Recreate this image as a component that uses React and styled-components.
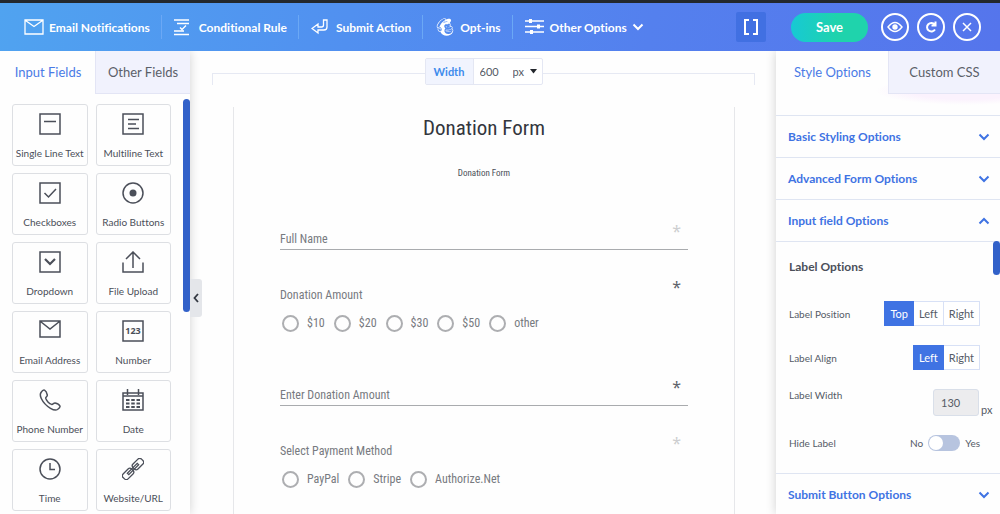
import React, { useState } from "react";
import styled, { createGlobalStyle } from "styled-components";
import { FaMailchimp } from "react-icons/fa";

const GlobalStyle = createGlobalStyle`
  * {
    box-sizing: border-box;
  }

  body {
    margin: 0;
    background: #fefefe;
    color: #555b66;
    font-family: Lato, "Open Sans", sans-serif;
    font-size: 11px;
    font-variant-ligatures: none;
  }

  button, input, select {
    margin: 0;
    padding: 0;
    border: 0;
    background: none;
    color: inherit;
    font: inherit;
    font-variant-ligatures: none;
  }

  button {
    cursor: pointer;
  }
`;

const Page = styled.div`
  display: flex;
  flex-direction: column;
  height: 100vh;
  overflow: hidden;
`;

const TopBar = styled.header`
  position: relative;
  z-index: 1;
  display: flex;
  align-items: center;
  justify-content: space-between;
  flex: none;
  height: 51px;
  padding: 0 19px 0 12px;
  border-top: 3px solid #23282d;
  background: linear-gradient(100deg, #50a3f0 0%, #5190f0 35%, #5480ee 65%, #5575ec 100%);
  color: white;
`;

const Nav = styled.nav`
  display: flex;
`;

const NavItem = styled.button`
  display: flex;
  align-items: center;
  gap: 5px;
  height: 24px;
  padding: 0 11px 0 12px;
  border-right: 1px solid #6ba8f5;
  font-size: 12px;
  font-weight: 700;
  white-space: nowrap;

  &:last-child {
    border-right: 0;
  }

  svg {
    flex: none;
  }
`;

const Actions = styled.div`
  display: flex;
  align-items: center;
  gap: 8px;
`;

const BracketButton = styled.button`
  display: grid;
  place-items: center;
  width: 30px;
  height: 30px;
  margin-right: 17px;
  border-radius: 2px;
  background: #4170e2;
`;

const SaveButton = styled.button`
  width: 77px;
  height: 29px;
  margin-right: 5px;
  border-radius: 15px;
  background: linear-gradient(90deg, #17c9d4, #1fd3ac 60%);
  font-size: 13px;
  font-weight: 700;
`;

const RoundButton = styled.button`
  display: grid;
  place-items: center;
  width: 28px;
  height: 28px;
  border: 2px solid white;
  border-radius: 50%;
`;

const Body = styled.div`
  display: flex;
  flex: 1;
  min-height: 0;
`;

const Sidebar = styled.aside`
  position: relative;
  flex: none;
  width: 190px;
  background: #fefefe;
  box-shadow: 0 0 10px rgba(0, 0, 0, 0.18);
`;

const Tabs = styled.div`
  display: flex;
  height: 43px;
`;

const Tab = styled.button`
  flex: 1;
  border-left: 1px solid ${(props) => (props.$active ? "transparent" : "#e3e5f5")};
  border-bottom: 1px solid ${(props) => (props.$active ? "transparent" : "#e3e5f5")};
  background: ${(props) => (props.$active ? "transparent" : "#f1f2fd")};
  color: ${(props) => (props.$active ? "#4a7be6" : "#5b5f69")};
  font-size: 13px;
  white-space: nowrap;
`;

const FieldGrid = styled.div`
  display: grid;
  grid-template-columns: repeat(2, minmax(0, 1fr));
  gap: 7px 8px;
  padding: 10px 19px 0 12px;
`;

const FieldCard = styled.button`
  display: flex;
  flex-direction: column;
  align-items: center;
  justify-content: space-between;
  height: 62px;
  padding: 8px 0 5px;
  border: 1px solid #dddfe3;
  border-radius: 3px;
  color: #4b4f59;
  font-size: 10px;
  line-height: 14px;
  white-space: nowrap;
`;

const Thumb = styled.div`
  position: absolute;
  top: ${(props) => props.$top}px;
  right: 0;
  width: 7px;
  height: ${(props) => props.$height}px;
  border-radius: 4px;
  background: #3261c9;
`;

const CollapseButton = styled.button`
  position: absolute;
  top: 228px;
  left: 100%;
  display: grid;
  place-items: center;
  width: 12px;
  height: 38px;
  border-radius: 0 3px 3px 0;
  background: #e4e6ea;
  color: #333842;
`;

const Canvas = styled.main`
  flex: 1;
  min-width: 0;
  display: flex;
  flex-direction: column;
`;

const Ruler = styled.div`
  position: relative;
  flex: none;
  height: 12px;
  margin: 22px 21px 0 22px;
  border: 1px solid #e6e9f3;
  border-bottom: 0;
`;

const WidthControl = styled.div`
  position: absolute;
  top: -16px;
  left: 50%;
  display: flex;
  align-items: center;
  width: 118px;
  height: 27px;
  border: 1px solid #e4e7f3;
  border-radius: 2px;
  background: white;
  transform: translateX(-50%);

  label {
    width: 48px;
    border-right: 1px solid #e4e7f3;
    background: #f1f4fe;
    color: #3d8bec;
    font-weight: 700;
    line-height: 25px;
    text-align: center;
  }

  input {
    width: 34px;
    padding-left: 6px;
  }

  select {
    width: 26px;
    padding-left: 5px;
    appearance: none;
  }
`;

const SelectWrap = styled.span`
  display: flex;
  align-items: center;

  svg {
    flex: none;
    margin-left: -4px;
    pointer-events: none;
  }
`;

const Form = styled.form`
  flex: 1;
  margin: 22px 41px 0 43px;
  padding: 7px 46px 0;
  border: solid #e6e7ea;
  border-width: 0 1px;
  color: #777a80;
  font-family: "Roboto Condensed", Roboto, sans-serif;
  font-size: 12px;
`;

const FormTitle = styled.h1`
  margin: 0;
  color: #33363d;
  font-size: 21px;
  font-weight: 400;
  line-height: 28px;
  text-align: center;
`;

const FormSubtitle = styled.p`
  margin: 24px 0 49px;
  color: #4b4f57;
  font-size: 9px;
  line-height: 14px;
  text-align: center;
`;

const TextField = styled.div`
  display: grid;
  margin-bottom: 35px;
  border-bottom: 1px solid #a9abae;

  label, input {
    grid-area: 1 / 1;
    height: 20px;
    line-height: 20px;
  }
`;

const ChoiceField = styled.fieldset`
  margin: 0 0 53px;
  padding: 0;
  border: 0;
`;

const FieldLabel = styled.span`
  display: flex;
  justify-content: space-between;
  height: 20px;
  padding-right: 7px;
  line-height: 20px;
`;

const Required = styled.span`
  color: ${(props) => (props.$muted ? "#cdced0" : "#5f636b")};
  font-family: "Noto Sans", sans-serif;
  font-size: 16px;
  line-height: 4px;
`;

const Choices = styled.div`
  display: flex;
  gap: 9px;
  margin-top: 9px;
  padding-left: 2px;
`;

const Choice = styled.label`
  display: flex;
  align-items: center;
  gap: 8px;
  height: 18px;
  white-space: nowrap;

  input {
    width: 17px;
    height: 17px;
    border: 2px solid #adaeb1;
    border-radius: 50%;
    appearance: none;
  }

  input:checked {
    border-width: 5px;
    border-color: #3f70e4;
  }
`;

const StylePanel = styled(Sidebar)`
  width: 224px;
  background: radial-gradient(ellipse 90px 14px at 190px 40px, #fbf2fd 60%, #fefefe);
`;

const AccordionList = styled.div`
  margin-top: 21px;
`;

const AccordionHead = styled.button`
  display: flex;
  align-items: center;
  justify-content: space-between;
  width: 100%;
  height: 42px;
  padding: 0 10px 0 12px;
  border-top: 1px solid #dfe5f2;
  color: #3f73e3;
  font-size: 12px;
  font-weight: 700;
`;

const Settings = styled.section`
  display: grid;
  gap: 19px;
  padding: 16px 8px 22px 13px;
  border-top: 1px solid #dfe5f2;
  font-size: 10px;
`;

const SettingsTitle = styled.h2`
  margin: 0 0 6px;
  color: #4b4f59;
  font-size: 12px;
  font-weight: 700;
  line-height: 18px;
`;

const SettingRow = styled.div`
  display: flex;
  align-items: ${(props) => (props.$top ? "flex-start" : "center")};
  justify-content: space-between;
  padding-right: ${(props) => (props.$unit ? 0 : 12)}px;
`;

const Segments = styled.div`
  display: flex;
`;

const Segment = styled.button`
  height: 25px;
  padding: 0 5px;
  border: 1px solid ${(props) => (props.$active ? "#3f73e3" : "#d8e1f6")};
  background: ${(props) => (props.$active ? "#3f73e3" : "white")};
  color: ${(props) => (props.$active ? "white" : "inherit")};
  font-size: 11px;

  & + & {
    border-left-width: 0;
  }
`;

const NumberBox = styled.div`
  display: flex;
  align-items: flex-end;
  gap: 2px;
  height: 27px;
  font-size: 11px;

  input {
    width: 46px;
    height: 27px;
    padding-left: 7px;
    border: 1px solid #d9dfe9;
    border-radius: 3px;
    background: #ececee;
  }

  span {
    width: 11px;
    line-height: 12px;
  }
`;

const SwitchBox = styled.span`
  display: flex;
  align-items: center;
  gap: 5px;
  height: 16px;
`;

const Switch = styled.input`
  display: flex;
  align-items: center;
  width: 32px;
  height: 16px;
  padding: 1px;
  border-radius: 8px;
  background: #b7c4df;
  appearance: none;

  &::before {
    content: "";
    width: 14px;
    height: 14px;
    border-radius: 50%;
    background: white;
  }

  &:checked {
    justify-content: flex-end;
    background: #3f73e3;
  }
`;

const Icon = ({ size = 22, width, stroke = 1.5, children }) => (
  <svg
    width={width || size}
    height={size}
    viewBox={`0 0 ${width || size} ${size}`}
    fill="none"
    stroke="currentColor"
    strokeWidth={stroke}
    aria-hidden="true"
  >
    {children}
  </svg>
);

const Chevron = ({ up }) => (
  <Icon size={12} stroke={2}>
    <path d={up ? "M1.5 8.5 6 4l4.5 4.5" : "M1.5 3.5 6 8l4.5-4.5"} />
  </Icon>
);

const navItems = [
  {
    name: "Email Notifications",
    icon: (
      <Icon size={20} stroke={1.3}>
        <path d="M1 3h18v14H1zM1.5 3.5l8.500 6 8.500-6" />
      </Icon>
    ),
  },
  {
    name: "Conditional Rule",
    icon: (
      <Icon size={20} stroke={1.4}>
        <path d="M0 3h15M3 6.500h12M0 14h10M0 17.500h15M6 10.500l2 2 4-4" />
      </Icon>
    ),
  },
  {
    name: "Submit Action",
    icon: (
      <Icon size={20} stroke={1.3}>
        <path d="M12.500 3H16v7q0 3-3 3H7v3l-6-4.500L7 7v3h3.500q2 0 2-2z" />
      </Icon>
    ),
  },
  { name: "Opt-ins", icon: <FaMailchimp size={20} /> },
  {
    name: "Other Options",
    icon: (
      <Icon size={20} stroke={1.6}>
        <path d="M0 4h19M0 9.500h19M0 15h19" />
        <path d="M4 2h3v4H4zM12 7.500h3v4h-3zM5 13h3v4H5z" fill="currentColor" stroke="none" />
      </Icon>
    ),
    more: true,
  },
];

const fields = [
  {
    name: "Single Line Text",
    icon: <path d="M1 1h20v20H1zM5 8.500h12" />,
  },
  {
    name: "Multiline Text",
    icon: <path d="M1 1h20v20H1zM6 6.500h11M6 11h8M6 15.500h11" />,
  },
  {
    name: "Checkboxes",
    icon: <path d="M1 1h20v20H1zM5.500 11l4 4 7.500-8" />,
  },
  {
    name: "Radio Buttons",
    icon: (
      <>
        <circle cx="11" cy="11" r="10" />
        <circle cx="11" cy="11" r="3.500" fill="currentColor" stroke="none" />
      </>
    ),
  },
  {
    name: "Dropdown",
    icon: (
      <>
        <path d="M1 1h20v20H1z" />
        <path d="M6 8l5 5 5-5" strokeWidth="2.200" />
      </>
    ),
  },
  {
    name: "File Upload",
    icon: <path d="M1 11.500V21h20v-9.500M11 17V1.500M4 8l7-7 7 7" />,
  },
  {
    name: "Email Address",
    icon: <path d="M1 1h20v16H1zM1.500 1.500L11 9l9.500-7.500" />,
  },
  {
    name: "Number",
    icon: (
      <>
        <path d="M1 1h20v20H1z" />
        <text
          x="11"
          y="14"
          textAnchor="middle"
          fontSize="9"
          fontWeight="700"
          fontFamily="Open Sans, sans-serif"
          fill="currentColor"
          stroke="none"
        >
          123
        </text>
      </>
    ),
  },
  {
    name: "Phone Number",
    icon: (
      <path d="M2 3.500C3 2 4.500.7 5.500 1.200 7 2 8 4.500 8.300 6c.2 1.300-1.800 2-1.600 3.200.5 2.300 3.500 5.500 6 6.200 1.300.3 2-1.700 3.400-1.500 1.500.3 4.200 1.700 4.800 3 .5 1-1 2.600-2.400 3.600-1.500 1-4.500.3-7-1.200C7.500 16.900 4.200 13.500 2.300 9.500 1.200 7.200 1 5 2 3.500z" />
    ),
  },
  {
    name: "Date",
    icon: (
      <>
        <path d="M1 4h20v17H1zM1 7h20M5.500 0v6M16.500 0v6" />
        <path d="M4 11h14M4 14.500h14M4 18h14" strokeWidth="2" strokeDasharray="3.500 1.750" />
      </>
    ),
  },
  {
    name: "Time",
    icon: (
      <>
        <circle cx="11" cy="11" r="10" />
        <path d="M11 5v6.500h5" />
      </>
    ),
  },
  {
    name: "Website/URL",
    icon: (
      <g transform="rotate(-45 11 11)" strokeWidth="1.300">
        <rect x="-2" y="7.500" width="12" height="7" rx="2.500" />
        <rect x="12" y="7.500" width="12" height="7" rx="2.500" />
        <path d="M4 10h14v2H4z" />
      </g>
    ),
  },
];

const amounts = ["$10", "$20", "$30", "$50", "other"];
const methods = ["PayPal", "Stripe", "Authorize.Net"];

const SegmentControl = ({ label, options, initial }) => {
  const [value, setValue] = useState(initial);

  return (
    <SettingRow>
      <span>{label}</span>
      <Segments role="group" aria-label={label}>
        {options.map((option) => (
          <Segment
            key={option}
            type="button"
            $active={option === value}
            aria-pressed={option === value}
            onClick={() => setValue(option)}
          >
            {option}
          </Segment>
        ))}
      </Segments>
    </SettingRow>
  );
};

const LineInput = ({ id, label, muted }) => (
  <TextField>
    <label htmlFor={id}>
      <FieldLabel>
        {label}
        <Required $muted={muted}>*</Required>
      </FieldLabel>
    </label>
    <input id={id} type="text" />
  </TextField>
);

const RadioSet = ({ name, label, options, muted }) => (
  <ChoiceField aria-label={label}>
    <FieldLabel>
      {label}
      <Required $muted={muted}>*</Required>
    </FieldLabel>
    <Choices>
      {options.map((option) => (
        <Choice key={option}>
          <input type="radio" name={name} value={option} />
          {option}
        </Choice>
      ))}
    </Choices>
  </ChoiceField>
);

const PanelTabs = ({ names }) => {
  const [active, setActive] = useState(names[0]);

  return (
    <Tabs role="tablist">
      {names.map((name) => (
        <Tab
          key={name}
          type="button"
          role="tab"
          aria-selected={name === active}
          $active={name === active}
          onClick={() => setActive(name)}
        >
          {name}
        </Tab>
      ))}
    </Tabs>
  );
};

const App = () => {
  const [open, setOpen] = useState(true);

  return (
    <Page>
      <GlobalStyle />
      <TopBar>
        <Nav>
          {navItems.map((item) => (
            <NavItem key={item.name} type="button">
              {item.icon}
              {item.name}
              {item.more && <Chevron />}
            </NavItem>
          ))}
        </Nav>
        <Actions>
          <BracketButton type="button" aria-label="Shortcodes">
            <Icon size={16} stroke={2}>
              <path d="M6 1H2v14h4M10 1h4v14h-4" />
            </Icon>
          </BracketButton>
          <SaveButton type="button">Save</SaveButton>
          <RoundButton type="button" aria-label="Preview">
            <Icon size={16} stroke={1.4}>
              <path d="M1 8q7-9 14 0-7 9-14 0z" />
              <circle cx="8" cy="8" r="2" fill="currentColor" />
            </Icon>
          </RoundButton>
          <RoundButton type="button" aria-label="Reset">
            <Icon size={14} stroke={2}>
              <path d="M11 9.500a4.300 4.300 0 1 1-.3-5M11.500 1.500V5.500h-4" />
            </Icon>
          </RoundButton>
          <RoundButton type="button" aria-label="Close">
            <Icon size={10} stroke={1.5}>
              <path d="M1 1l8 8M9 1L1 9" />
            </Icon>
          </RoundButton>
        </Actions>
      </TopBar>

      <Body>
        <Sidebar>
          <PanelTabs names={["Input Fields", "Other Fields"]} />
          <FieldGrid>
            {fields.map((field) => (
              <FieldCard key={field.name} type="button">
                <Icon>{field.icon}</Icon>
                {field.name}
              </FieldCard>
            ))}
          </FieldGrid>
          <Thumb $top={48} $height={213} />
          <CollapseButton type="button" aria-label="Collapse sidebar">
            <Icon size={10} width={6} stroke={1.8}>
              <path d="M5 1L1.500 5 5 9" />
            </Icon>
          </CollapseButton>
        </Sidebar>

        <Canvas>
          <Ruler>
            <WidthControl>
              <label htmlFor="form-width">Width</label>
              <input id="form-width" type="text" defaultValue="600" />
              <SelectWrap>
                <select aria-label="Width unit" defaultValue="px">
                  <option>px</option>
                  <option>%</option>
                </select>
                <svg width="7" height="5" viewBox="0 0 7 5" aria-hidden="true">
                  <path d="M0 0h7L3.500 4.500z" fill="#23262c" />
                </svg>
              </SelectWrap>
            </WidthControl>
          </Ruler>
          <Form>
            <FormTitle>Donation Form</FormTitle>
            <FormSubtitle>Donation Form</FormSubtitle>
            <LineInput id="full-name" label="Full Name" muted />
            <RadioSet name="amount" label="Donation Amount" options={amounts} />
            <LineInput id="custom-amount" label="Enter Donation Amount" />
            <RadioSet name="method" label="Select Payment Method" options={methods} muted />
          </Form>
        </Canvas>

        <StylePanel>
          <PanelTabs names={["Style Options", "Custom CSS"]} />
          <AccordionList>
            <AccordionHead type="button">
              Basic Styling Options
              <Chevron />
            </AccordionHead>
            <AccordionHead type="button">
              Advanced Form Options
              <Chevron />
            </AccordionHead>
            <AccordionHead type="button" aria-expanded={open} onClick={() => setOpen(!open)}>
              Input field Options
              <Chevron up={open} />
            </AccordionHead>
            {open && (
              <Settings>
                <SettingsTitle>Label Options</SettingsTitle>
                <SegmentControl
                  label="Label Position"
                  options={["Top", "Left", "Right"]}
                  initial="Top"
                />
                <SegmentControl label="Label Align" options={["Left", "Right"]} initial="Left" />
                <SettingRow $top $unit>
                  <label htmlFor="label-width">Label Width</label>
                  <NumberBox>
                    <input id="label-width" type="text" defaultValue="130" />
                    <span>px</span>
                  </NumberBox>
                </SettingRow>
                <SettingRow>
                  <label htmlFor="hide-label">Hide Label</label>
                  <SwitchBox>
                    No
                    <Switch id="hide-label" type="checkbox" role="switch" />
                    Yes
                  </SwitchBox>
                </SettingRow>
              </Settings>
            )}
            <AccordionHead type="button">
              Submit Button Options
              <Chevron />
            </AccordionHead>
          </AccordionList>
          <Thumb $top={190} $height={34} />
        </StylePanel>
      </Body>
    </Page>
  );
};

export default App;
